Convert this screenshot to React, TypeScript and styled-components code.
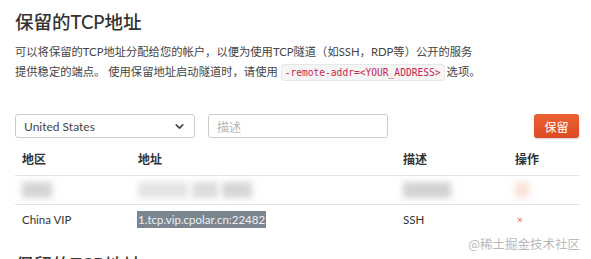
import styled, { createGlobalStyle } from "styled-components";
import { ChevronDown } from "lucide-react";

const GlobalStyle = createGlobalStyle`
  body {
    margin: 0;
    background: #fff;
    font-family: Lato, "Noto Sans CJK SC", sans-serif;
    color: #333;
    overflow: hidden;
  }
`;

const Page = styled.div`
  position: relative;
  width: 591px;
  height: 259px;
  padding: 7px 12px 0 15px;
  box-sizing: border-box;
  overflow: hidden;
`;

const Title = styled.h1`
  margin: 0;
  font-size: 18.5px;
  line-height: 30px;
  font-weight: 500;
  color: #333;
`;

const Intro = styled.p`
  margin: 5px 0 0;
  font-size: 11.3px;
  line-height: 20px;
  color: #444;
`;

const Code = styled.code`
  font-family: "DejaVu Sans Mono", monospace;
  font-size: 9.6px;
  color: #c7254e;
  background: #f5f5f5;
  border: 1px solid #e8e8e8;
  border-radius: 3px;
  padding: 2px 3px;
  margin-right: 2px;
`;

const Controls = styled.div`
  display: flex;
  align-items: center;
  gap: 13px;
  margin-top: 31px;
  height: 24px;
`;

const Field = styled.div<{ $placeholder?: boolean }>`
  width: 180px;
  height: 24px;
  box-sizing: border-box;
  border: 1px solid #ccc;
  border-radius: 3px;
  display: flex;
  align-items: center;
  justify-content: space-between;
  padding: 0 8px;
  font-size: 12px;
  color: ${(p) => (p.$placeholder ? "#b5b5b5" : "#444")};
`;

const SaveButton = styled.button`
  margin-left: auto;
  width: 45px;
  height: 24px;
  border: none;
  border-radius: 3px;
  background: linear-gradient(#ec6234, #dc4b22);
  color: #fff;
  font-family: inherit;
  font-size: 12px;
  box-shadow: 0 1px 2px rgba(0, 0, 0, 0.2);
`;

const Table = styled.div`
  margin-top: 4px;
  width: 564px;
`;

const Row = styled.div<{ $head?: boolean; $line?: boolean }>`
  display: grid;
  grid-template-columns: 116px 265px 112px 1fr;
  align-items: center;
  height: ${(p) => (p.$head ? "33px" : "28px")};
  border-bottom: ${(p) => (p.$line ? "1px solid #e2e2e2" : "none")};
  font-size: ${(p) => (p.$head ? "12px" : "11.5px")};
  font-weight: ${(p) => (p.$head ? 700 : 400)};
  color: #333;
`;

const Cell = styled.div`
  padding-left: 7px;
  display: flex;
  align-items: center;
  gap: 4px;
`;

const Blur = styled.span<{ $w: number; $c: string }>`
  display: inline-block;
  width: ${(p) => p.$w}px;
  height: 16px;
  background: ${(p) => p.$c};
  filter: blur(3px);
`;

const Selected = styled.span`
  background: #7b858f;
  color: #eef0f2;
  padding: 2px 1px;
  margin-left: -1px;
`;

const Remove = styled.span`
  color: #e8584a;
  font-size: 10px;
  padding-left: 2px;
`;

const SubTitle = styled(Title)`
  margin-top: 17px;
`;

const Watermark = styled.div`
  position: absolute;
  right: 11px;
  top: 234px;
  font-size: 12.5px;
  color: #b9b9b9;
  font-family: "Noto Sans CJK SC", sans-serif;
`;

export default function App() {
  return (
    <Page>
      <GlobalStyle />
      <Title>保留的TCP地址</Title>
      <Intro>
        可以将保留的TCP地址分配给您的帐户，以便为使用TCP隧道（如SSH，RDP等）公开的服务
        <br />
        提供稳定的端点。 使用保留地址启动隧道时，请使用 <Code>-remote-addr=&lt;YOUR_ADDRESS&gt;</Code>选项。
      </Intro>
      <Controls>
        <Field>
          United States
          <ChevronDown size={13} strokeWidth={3} color="#444" />
        </Field>
        <Field $placeholder>描述</Field>
        <SaveButton>保留</SaveButton>
      </Controls>
      <Table>
        <Row $head $line>
          <Cell>地区</Cell>
          <Cell>地址</Cell>
          <Cell>描述</Cell>
          <Cell>操作</Cell>
        </Row>
        <Row $line>
          <Cell>
            <Blur $w={30} $c="#d4d4d4" />
          </Cell>
          <Cell>
            <Blur $w={50} $c="#e4e4e4" />
            <Blur $w={26} $c="#dcdcdc" />
            <Blur $w={30} $c="#d6d6d6" />
          </Cell>
          <Cell>
            <Blur $w={48} $c="#d2d2d2" />
          </Cell>
          <Cell>
            <Blur $w={14} $c="#fbe3da" />
          </Cell>
        </Row>
        <Row>
          <Cell>China VIP</Cell>
          <Cell>
            <Selected>1.tcp.vip.cpolar.cn:22482</Selected>
          </Cell>
          <Cell>SSH</Cell>
          <Cell>
            <Remove>×</Remove>
          </Cell>
        </Row>
      </Table>
      <SubTitle>保留的TCP地址</SubTitle>
      <Watermark>@稀土掘金技术社区</Watermark>
    </Page>
  );
}
